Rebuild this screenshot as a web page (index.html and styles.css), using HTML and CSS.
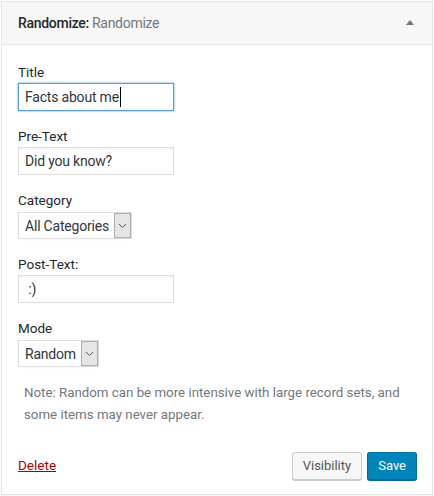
FILE: index.html
```html
<!DOCTYPE html>
<html lang="en">
<head>
<meta charset="utf-8">
<title>Randomize widget</title>
<link rel="stylesheet" href="styles.css">
</head>
<body>
<div class="widget">
  <div class="widget-top">
    <h3 class="widget-title">Randomize:<span class="in-widget-title"> Randomize</span></h3>
    <span class="toggle-arrow" aria-hidden="true"></span>
  </div>
  <div class="widget-inside">
    <div class="field">
      <label class="field-label" for="title">Title</label>
      <div class="caret-wrap">
        <input class="text-input is-focused" id="title" type="text" value="Facts about me">
        <span class="caret-mirror" aria-hidden="true">Facts about me</span>
      </div>
    </div>
    <div class="field">
      <label class="field-label" for="pre">Pre-Text</label>
      <input class="text-input" id="pre" type="text" value="Did you know?">
    </div>
    <div class="field">
      <label class="field-label" for="cat">Category</label>
      <div class="select-box">
        <select class="select" id="cat"><option>All Categories</option></select>
        <span class="select-btn"><svg width="9" height="6" viewBox="0 0 9 6"><path d="M1 1 L4.5 4.5 L8 1" fill="none" stroke="#555" stroke-width="1"/></svg></span>
      </div>
    </div>
    <div class="field">
      <label class="field-label" for="post">Post-Text:</label>
      <input class="text-input" id="post" type="text" value=" :)">
    </div>
    <div class="field">
      <label class="field-label" for="mode">Mode</label>
      <div class="select-box">
        <select class="select" id="mode"><option>Random</option></select>
        <span class="select-btn"><svg width="9" height="6" viewBox="0 0 9 6"><path d="M1 1 L4.5 4.5 L8 1" fill="none" stroke="#555" stroke-width="1"/></svg></span>
      </div>
    </div>
    <p class="note">Note: Random can be more intensive with large record sets, and some items may never appear.</p>
    <div class="widget-control-actions">
      <a class="delete-link" href="#">Delete</a>
      <div class="buttons">
        <button class="button" type="button">Visibility</button>
        <button class="button button-primary" type="button">Save</button>
      </div>
    </div>
  </div>
</div>
</body>
</html>
```
FILE: styles.css
```css
* { box-sizing: border-box; }

html, body {
  margin: 0;
  background: #fff;
}

body {
  padding: 1px;
  font-family: Roboto, "Open Sans", sans-serif;
  font-size: 13px;
  color: #23282d;
}

.widget {
  width: 432px;
  height: 494px;
  border: 1px solid #e5e5e5;
  background: #fff;
  box-shadow: 0 1px 1px rgba(0, 0, 0, 0.04);
  display: flex;
  flex-direction: column;
}

.widget-top {
  height: 43px;
  background: #f7f7f7;
  border-bottom: 1px solid #e5e5e5;
  display: flex;
  align-items: center;
  justify-content: space-between;
  padding: 0 18px 0 16px;
}

.widget-title {
  margin: 0;
  font-size: 14px;
  font-weight: 500;
  letter-spacing: -0.3px;
  color: #23282d;
}

.in-widget-title {
  font-weight: 400;
  color: #72777c;
}

.toggle-arrow {
  width: 0;
  height: 0;
  border-left: 4px solid transparent;
  border-right: 4px solid transparent;
  border-bottom: 5px solid #72777c;
  margin-top: -2px;
}

.widget-inside {
  flex: 1;
  padding: 18px 15px 0 16px;
  display: flex;
  flex-direction: column;
}

.field {
  display: flex;
  flex-direction: column;
  align-items: flex-start;
  margin-bottom: 16px;
}

.field-label {
  line-height: 18px;
  margin-bottom: 2px;
  font-size: 13.5px;
  color: #23282d;
}

.text-input {
  width: 156px;
  height: 28px;
  margin: 0;
  padding: 0 6px;
  border: 1px solid #ddd;
  box-shadow: inset 0 1px 2px rgba(0, 0, 0, 0.07);
  background: #fff;
  color: #32373c;
  font-family: inherit;
  font-size: 14px;
  letter-spacing: -0.2px;
  outline: none;
}

.text-input.is-focused {
  border-color: #5b9dd9;
  box-shadow: 0 0 2px rgba(30, 140, 190, 0.8);
}

/* text caret drawn after an invisible copy of the field's value */
.caret-wrap {
  position: relative;
}

.caret-mirror {
  position: absolute;
  left: 7px;
  top: 4px;
  height: 20px;
  font-size: 14px;
  letter-spacing: -0.2px;
  line-height: 20px;
  color: transparent;
  white-space: pre;
  pointer-events: none;
}

.caret-mirror::after {
  content: "";
  display: inline-block;
  width: 1px;
  height: 20px;
  margin-left: 1px;
  vertical-align: top;
  background: #000;
}

.select-box {
  display: flex;
  height: 27px;
  margin-top: 1px;
  border: 1px solid #ddd;
  background: #fff;
  box-shadow: 0 1px 2px rgba(0, 0, 0, 0.04);
}

.select {
  appearance: none;
  -webkit-appearance: none;
  border: 0;
  margin: 0;
  padding: 0 5px 0 6px;
  height: 25px;
  background: transparent;
  font-family: inherit;
  font-size: 14px;
  letter-spacing: -0.2px;
  color: #32373c;
  outline: none;
}

.select-btn {
  width: 17px;
  height: 25px;
  border: 1px solid #adadad;
  background: #e5e5e5;
  display: flex;
  align-items: center;
  justify-content: center;
}

.note {
  margin: -1px 0 0 6px;
  font-size: 13.3px;
  line-height: 22px;
  color: #72777c;
}

.widget-control-actions {
  margin-top: auto;
  padding: 0 0 14px 0;
  display: flex;
  align-items: center;
  justify-content: space-between;
}

.delete-link {
  color: #a00;
  text-decoration: underline;
  font-size: 13.5px;
  margin-top: -3px;
}

.buttons {
  display: flex;
  gap: 5px;
}

.button {
  height: 28px;
  padding: 0 10px 1px;
  border: 1px solid #ccc;
  border-radius: 3px;
  background: #f7f7f7;
  box-shadow: 0 1px 0 #ccc;
  color: #555;
  font-family: inherit;
  font-size: 13px;
  line-height: 26px;
  cursor: pointer;
}

.button-primary {
  background: #0085ba;
  border-color: #0073aa #006799 #006799;
  box-shadow: 0 1px 0 #006799;
  color: #fff;
}
```
